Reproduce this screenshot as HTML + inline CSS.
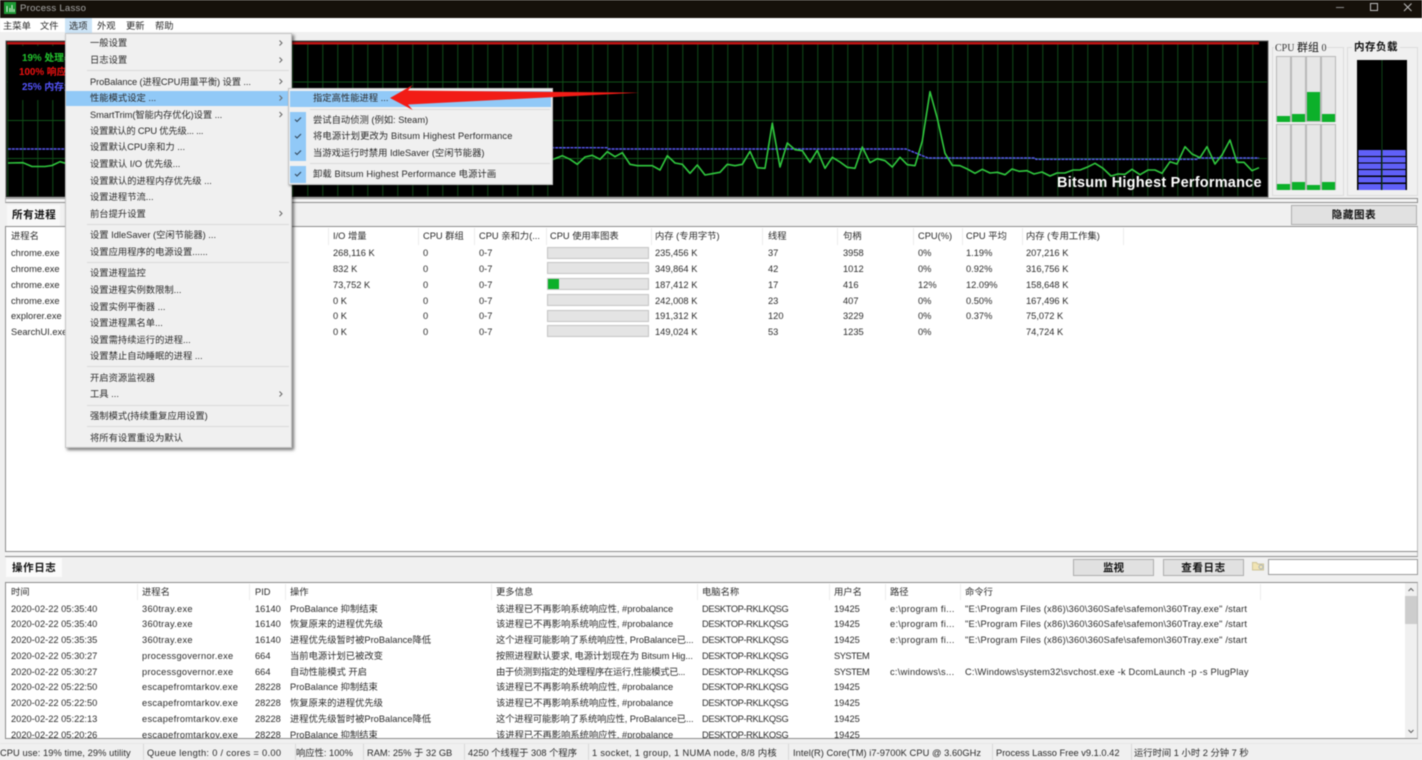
<!DOCTYPE html>
<html lang="zh"><head><meta charset="utf-8"><title>Process Lasso</title>
<style>
html,body{margin:0;padding:0;width:1422px;height:760px;overflow:hidden;background:#f0f0f0}
#p{position:relative;width:1422px;height:760px;overflow:hidden;background:#f0f0f0;font:9.3px/12px "Liberation Sans","Noto Sans CJK SC",sans-serif;color:#2a2a2a;filter:blur(.4px)}
#p div,#p span,#p svg{position:absolute}
span{white-space:nowrap}
.b{font-weight:700;font-size:10.5px;letter-spacing:.6px;color:#111;text-align:center}
.box{box-sizing:border-box}
.rw{left:0;width:1422px;height:12px}
.sep{background:#d9d9d9;height:1px;left:87px;width:202px}
.cs{width:1px;background:#ececec}
.pb{left:547px;width:102px;height:12px;box-sizing:border-box;background:#e4e4e4;border:1px solid #c4c4c4}
.sb{top:744px;width:1px;height:16px;background:#d8d8d8}
.bar{box-sizing:border-box;background:#e6e6e6;border:1px solid #b8b8b8}
.fill{background:#0cb02a}
.btn{box-sizing:border-box;background:#e1e1e1;border:1px solid #adadad}
.lc{letter-spacing:.27px}
.uc{letter-spacing:-.4px}
.cmd{letter-spacing:.2px}
.sy{letter-spacing:-.5px}
.t1{letter-spacing:-.1px}
.t2{letter-spacing:-.3px}
.pa{letter-spacing:.3px}
.q{letter-spacing:.3px}
</style></head><body><div id="p">

<!-- title bar -->
<div style="left:0;top:0;width:1422px;height:18px;background:#16110a"></div>
<div style="left:4px;top:2px;width:12px;height:12px;background:#1d9a35"></div>
<svg style="left:4px;top:2px" width="12" height="12"><path d="M3 4v6M6 6v4M8 3v7M10 7v3" stroke="#dff5e0" stroke-width="1"/></svg>
<span style="left:20px;top:2.500px;color:#a9a9a9;font-size:9.6px;letter-spacing:.25px">Process Lasso</span>
<svg style="left:1330px;top:0" width="92" height="18"><path d="M6 7.500h8" stroke="#8a8a8a"/><rect x="40.500" y="3.500" width="7" height="7" fill="none" stroke="#bdbdbd"/><path d="M74 3.500l7.500 7.500M81.500 3.500L74 11" stroke="#bdbdbd"/></svg>

<!-- menu bar -->
<div style="left:0;top:18px;width:1422px;height:14px;background:#fff"></div>
<div style="left:65px;top:18px;width:27px;height:15px;background:#cce4f7"></div>
<span style="left:3px;top:20px">主菜单</span><span style="left:40px;top:20px">文件</span><span style="left:69px;top:20px">选项</span><span style="left:97px;top:20px">外观</span><span style="left:126px;top:20px">更新</span><span style="left:155px;top:20px">帮助</span>

<!-- main graph -->
<svg style="left:0;top:0" width="1422" height="760">
<defs><pattern id="g" x="7.300" y="0" width="15" height="760" patternUnits="userSpaceOnUse"><rect x="0" width="1" height="760" fill="#0f4a16"/></pattern></defs>
<rect x="6" y="41" width="1262" height="156" fill="#000"/>
<rect x="7" y="44" width="1260" height="152" fill="url(#g)"/>
<path d="M7 82H1267M7 120.500H1267M7 158.500H1267" stroke="#0f5018" stroke-width="1"/>
<rect x="8" y="46" width="120" height="54" fill="#000"/>
<rect x="6" y="41" width="1262" height="156" fill="none" stroke="#5a5a5a" stroke-width="1"/>
<rect x="7" y="42" width="1252" height="2.500" fill="#c01414"/>
<polyline fill="none" stroke="#5a5af5" stroke-width="1.400" stroke-dasharray="3 .8" points="8,149 63,149 300,148 607,147.700 608,149 906,149 928,158 1035,158 1036,159.300 1197,159.300 1198,158 1259,158"/>
<polyline fill="none" stroke="#30c83e" stroke-width="1.600" stroke-linejoin="round" points="8,163 23,162.700 32,166.500 45,166.500 52,165.500 60,161.700 68,164 120,160 553.300,159.300 562.300,155.700 570,159.300 577.300,164.300 585,157 592.300,155.300 600,159.300 607.300,151.700 615,156.700 622.300,152.700 630,164.300 637.300,165.700 645,165.700 652.300,165.700 660,170 667.300,155.700 675,163 682.300,164.300 690,173.300 697.300,165 705,175 712.300,173.700 720,172.300 727.300,164.300 735,165.700 742.300,164.300 750,151.300 757.300,167.700 765,168.300 772.300,123.300 780,167 787.300,143 795,149.700 802.300,150.700 810,162.300 817.300,150.300 825,168.300 832.300,157.300 840,162 847.300,167.300 855,168.300 862.300,147 870,162.700 877.300,158.700 885,160.700 892.300,167 900,157.300 907.300,164.700 915,165.700 922.300,141 930,91.700 937.300,118.300 945,153.300 952.300,165.300 960,165.700 967.300,169 975,173.300 982.300,169.300 990,173 997.300,172.300 1005,174.700 1012,169 1019,171.300 1027,170.700 1034,174 1042,172 1050,176 1057,173 1065,173 1073,170 1080,170 1087,167.300 1095,163.300 1103,168.300 1111,176 1118,174 1125,174.300 1132,169.300 1140,174.700 1148,170 1155,170 1162,173.300 1170,161.700 1177,164 1185,146.700 1192,154 1200,157.700 1207,146.700 1215,164 1222,155 1230,140 1237,162.300 1244,162.300 1252,170.700 1259,167.700"/>
</svg>
<span style="left:22px;top:53px;color:#22c22e;font-weight:700;font-size:9.800px">19% 处理器使用率</span>
<span style="left:19px;top:67px;color:#f01010;font-weight:700;font-size:9.800px">100% 响应性</span>
<span style="left:22px;top:82px;color:#5555ff;font-weight:700;font-size:9.800px">25% 内存负载</span>
<span style="left:1057px;top:174px;line-height:18px;color:#fff;font-weight:700;font-size:14.500px;letter-spacing:.22px;text-shadow:0 0 1px #000">Bitsum Highest Performance</span>

<!-- CPU group -->
<div class="box" style="left:1272px;top:47px;width:72px;height:149px;border:1px solid #dcdcdc"></div>
<span style="left:1274px;top:41px;background:#f0f0f0;padding:0 1px;font:10px/12px 'Liberation Serif','Noto Sans CJK SC',serif;color:#333">CPU <b style="position:static;font-weight:400;font-size:11px;font-family:'Noto Sans CJK SC',sans-serif;color:#111">群组</b> 0</span>
<div class="bar" style="left:1276px;top:56px;width:15px;height:66px"></div><div class="fill" style="left:1277px;top:116px;width:13px;height:6px"></div>
<div class="bar" style="left:1291px;top:56px;width:15px;height:66px"></div><div class="fill" style="left:1292px;top:114px;width:13px;height:8px"></div>
<div class="bar" style="left:1306px;top:56px;width:15px;height:66px"></div><div class="fill" style="left:1307px;top:92px;width:13px;height:29px"></div>
<div class="bar" style="left:1321px;top:56px;width:15px;height:66px"></div><div class="fill" style="left:1322px;top:114px;width:13px;height:8px"></div>
<div class="bar" style="left:1276px;top:124px;width:15px;height:66px"></div><div class="fill" style="left:1277px;top:184px;width:13px;height:6px"></div>
<div class="bar" style="left:1291px;top:124px;width:15px;height:66px"></div><div class="fill" style="left:1292px;top:182px;width:13px;height:8px"></div>
<div class="bar" style="left:1306px;top:124px;width:15px;height:66px"></div><div class="fill" style="left:1307px;top:185px;width:13px;height:5px"></div>
<div class="bar" style="left:1321px;top:124px;width:15px;height:66px"></div><div class="fill" style="left:1322px;top:182px;width:13px;height:8px"></div>

<!-- memory -->
<div class="box" style="left:1347px;top:47px;width:71px;height:149px;border:1px solid #dcdcdc"></div>
<span class="b" style="left:1352px;top:41px;background:#f0f0f0;padding:0 2px;letter-spacing:.5px">内存负载</span>
<svg style="left:1357px;top:60px" width="50" height="130"><rect width="50" height="130" fill="#000"/><rect x="24.500" width="1" height="130" fill="#0d4014"/>
<path d="M1.500 90h22.500v6h-22.500zM1.500 97h22.500v5.500h-22.500zM1.500 103.500h22.500v5.500h-22.500zM1.500 110h22.500v5.500h-22.500zM1.500 117h22.500v5.500h-22.500zM1.500 124h22.500v6h-22.500zM25.500 90h23v6h-23zM25.500 97h23v5.500h-23zM25.500 103.500h23v5.500h-23zM25.500 110h23v5.500h-23zM25.500 117h23v5.500h-23zM25.500 124h23v6h-23z" fill="#6060f8"/></svg>

<!-- splitter 1 -->
<div class="box" style="left:5px;top:198px;width:1413px;height:5px;border:1px solid #8d8d8d;border-left-color:#bbb;background:#f4f4f4"></div>

<!-- tab + button -->
<div style="left:7px;top:205px;width:53px;height:22px;background:#f8f8f8"></div>
<span class="b" style="left:12px;top:209px">所有进程</span>
<div class="btn" style="left:1291px;top:205px;width:126px;height:20px"></div>
<span class="b" style="left:1291px;top:209px;width:126px">隐藏图表</span>

<!-- process table -->
<div class="box" style="left:5px;top:226px;width:1413px;height:326px;background:#fff;border:1px solid #8c8c8c;border-color:#8c8c8c #bbb #8c8c8c #8c8c8c"></div>
<div class="cs" style="left:328px;top:228px;height:17px"></div><div class="cs" style="left:418px;top:228px;height:17px"></div><div class="cs" style="left:474px;top:228px;height:17px"></div><div class="cs" style="left:546px;top:228px;height:17px"></div><div class="cs" style="left:651px;top:228px;height:17px"></div><div class="cs" style="left:762px;top:228px;height:17px"></div><div class="cs" style="left:837px;top:228px;height:17px"></div><div class="cs" style="left:913px;top:228px;height:17px"></div><div class="cs" style="left:962px;top:228px;height:17px"></div><div class="cs" style="left:1022px;top:228px;height:17px"></div><div class="cs" style="left:1123px;top:228px;height:17px"></div>
<div class="rw" style="top:230px"><span style="left:11px">进程名</span><span style="left:333px">I/O 增量</span><span style="left:423px">CPU 群组</span><span style="left:479px">CPU 亲和力(...</span><span style="left:550px">CPU 使用率图表</span><span style="left:655px">内存 (专用字节)</span><span style="left:768px">线程</span><span style="left:843px">句柄</span><span style="left:918px">CPU(%)</span><span style="left:966px">CPU 平均</span><span style="left:1026px">内存 (专用工作集)</span></div>
<div class="pb" style="top:247px"></div><div class="pb" style="top:262px"></div><div class="pb" style="top:278px"></div><div class="pb" style="top:294px"></div><div class="pb" style="top:310px"></div><div class="pb" style="top:325px"></div>
<div class="fill" style="left:548px;top:279px;width:11px;height:10px"></div>
<div class="rw" style="top:247px"><span style="left:11px">chrome.exe</span><span style="left:333px">268,116 K</span><span style="left:423px">0</span><span style="left:479px">0-7</span><span style="left:655px">235,456 K</span><span style="left:768px">37</span><span style="left:843px">3958</span><span style="left:918px">0%</span><span style="left:966px">1.19%</span><span style="left:1026px">207,216 K</span></div>
<div class="rw" style="top:263px"><span style="left:11px">chrome.exe</span><span style="left:333px">832 K</span><span style="left:423px">0</span><span style="left:479px">0-7</span><span style="left:655px">349,864 K</span><span style="left:768px">42</span><span style="left:843px">1012</span><span style="left:918px">0%</span><span style="left:966px">0.92%</span><span style="left:1026px">316,756 K</span></div>
<div class="rw" style="top:279px"><span style="left:11px">chrome.exe</span><span style="left:333px">73,752 K</span><span style="left:423px">0</span><span style="left:479px">0-7</span><span style="left:655px">187,412 K</span><span style="left:768px">17</span><span style="left:843px">416</span><span style="left:918px">12%</span><span style="left:966px">12.09%</span><span style="left:1026px">158,648 K</span></div>
<div class="rw" style="top:294.500px"><span style="left:11px">chrome.exe</span><span style="left:333px">0 K</span><span style="left:423px">0</span><span style="left:479px">0-7</span><span style="left:655px">242,008 K</span><span style="left:768px">23</span><span style="left:843px">407</span><span style="left:918px">0%</span><span style="left:966px">0.50%</span><span style="left:1026px">167,496 K</span></div>
<div class="rw" style="top:310px"><span style="left:11px">explorer.exe</span><span style="left:333px">0 K</span><span style="left:423px">0</span><span style="left:479px">0-7</span><span style="left:655px">191,312 K</span><span style="left:768px">120</span><span style="left:843px">3229</span><span style="left:918px">0%</span><span style="left:966px">0.37%</span><span style="left:1026px">75,072 K</span></div>
<div class="rw" style="top:326px"><span style="left:11px">SearchUI.exe</span><span style="left:333px">0 K</span><span style="left:423px">0</span><span style="left:479px">0-7</span><span style="left:655px">149,024 K</span><span style="left:768px">53</span><span style="left:843px">1235</span><span style="left:918px">0%</span><span style="left:1026px">74,724 K</span></div>

<!-- splitter 2 -->
<div class="box" style="left:5px;top:552px;width:1413px;height:5px;border-bottom:1px solid #8d8d8d;border-right:1px solid #bbb;background:#f4f4f4"></div>

<!-- log tab + controls -->
<div style="left:6px;top:558px;width:56px;height:19px;background:#fbfbfb"></div>
<span class="b" style="left:12px;top:562px">操作日志</span>
<div class="btn" style="left:1073px;top:559px;width:81px;height:17px"></div>
<span class="b" style="left:1073px;top:562px;width:81px;letter-spacing:0">监视</span>
<div class="btn" style="left:1163px;top:559px;width:81px;height:17px"></div>
<span class="b" style="left:1163px;top:562px;width:81px">查看日志</span>
<svg style="left:1252px;top:560px" width="13" height="11"><path d="M.5 2.500h4l1 1.500h6v6h-11z" fill="#f1e4b4" stroke="#cfc59a"/><circle cx="9" cy="7" r="2" fill="none" stroke="#a9b4bd"/></svg>
<div class="box" style="left:1268px;top:559px;width:150px;height:16px;background:#fff;border:1px solid #9b9b9b"></div>

<!-- log table -->
<div class="box" style="left:5px;top:582px;width:1413px;height:157px;background:#fff;border:1px solid #8c8c8c;border-color:#8c8c8c #bbb #8c8c8c #8c8c8c"></div>
<div class="cs" style="left:137px;top:584px;height:16px"></div><div class="cs" style="left:249px;top:584px;height:16px"></div><div class="cs" style="left:285px;top:584px;height:16px"></div><div class="cs" style="left:491px;top:584px;height:16px"></div><div class="cs" style="left:697px;top:584px;height:16px"></div><div class="cs" style="left:829px;top:584px;height:16px"></div><div class="cs" style="left:885px;top:584px;height:16px"></div><div class="cs" style="left:960px;top:584px;height:16px"></div><div class="cs" style="left:1260px;top:584px;height:16px"></div>
<div class="rw" style="top:585.500px"><span style="left:11px">时间</span><span style="left:142px">进程名</span><span style="left:255px">PID</span><span style="left:290px">操作</span><span style="left:496px">更多信息</span><span style="left:702px">电脑名称</span><span style="left:834px">用户名</span><span style="left:890px">路径</span><span style="left:965px">命令行</span></div>
<div class="rw" style="top:602.500px"><span style="left:11px">2020-02-22 05:35:40</span><span class="lc" style="left:142px">360tray.exe</span><span style="left:255px">16140</span><span style="left:290px">ProBalance 抑制结束</span><span style="left:496px">该进程已不再影响系统响应性, #probalance</span><span class="uc" style="left:702px">DESKTOP-RKLKQSG</span><span style="left:834px">19425</span><span class="pa" style="left:890px">e:\program fi...</span><span class="cmd" style="left:965px">"E:\Program Files (x86)\360\360Safe\safemon\360Tray.exe" /start</span></div>
<div class="rw" style="top:618px"><span style="left:11px">2020-02-22 05:35:40</span><span class="lc" style="left:142px">360tray.exe</span><span style="left:255px">16140</span><span style="left:290px">恢复原来的进程优先级</span><span style="left:496px">该进程已不再影响系统响应性, #probalance</span><span class="uc" style="left:702px">DESKTOP-RKLKQSG</span><span style="left:834px">19425</span><span class="pa" style="left:890px">e:\program fi...</span><span class="cmd" style="left:965px">"E:\Program Files (x86)\360\360Safe\safemon\360Tray.exe" /start</span></div>
<div class="rw" style="top:634px"><span style="left:11px">2020-02-22 05:35:35</span><span class="lc" style="left:142px">360tray.exe</span><span style="left:255px">16140</span><span style="left:290px">进程优先级暂时被ProBalance降低</span><span class="t1" style="left:496px">这个进程可能影响了系统响应性, ProBalance已...</span><span class="uc" style="left:702px">DESKTOP-RKLKQSG</span><span style="left:834px">19425</span><span class="pa" style="left:890px">e:\program fi...</span><span class="cmd" style="left:965px">"E:\Program Files (x86)\360\360Safe\safemon\360Tray.exe" /start</span></div>
<div class="rw" style="top:649.500px"><span style="left:11px">2020-02-22 05:30:27</span><span class="lc" style="left:142px">processgovernor.exe</span><span style="left:255px">664</span><span style="left:290px">当前电源计划已被改变</span><span class="t1" style="left:496px">按照进程默认要求, 电源计划现在为 Bitsum Hig...</span><span class="uc" style="left:702px">DESKTOP-RKLKQSG</span><span class="sy" style="left:834px">SYSTEM</span></div>
<div class="rw" style="top:665.500px"><span style="left:11px">2020-02-22 05:30:27</span><span class="lc" style="left:142px">processgovernor.exe</span><span style="left:255px">664</span><span style="left:290px">自动性能模式 开启</span><span class="t2" style="left:496px">由于侦测到指定的处理程序在运行,性能模式已...</span><span class="uc" style="left:702px">DESKTOP-RKLKQSG</span><span class="sy" style="left:834px">SYSTEM</span><span class="lc" style="left:890px">c:\windows\s...</span><span class="cmd" style="left:965px">C:\Windows\system32\svchost.exe -k DcomLaunch -p -s PlugPlay</span></div>
<div class="rw" style="top:681px"><span style="left:11px">2020-02-22 05:22:50</span><span class="lc" style="left:142px">escapefromtarkov.exe</span><span style="left:255px">28228</span><span style="left:290px">ProBalance 抑制结束</span><span style="left:496px">该进程已不再影响系统响应性, #probalance</span><span class="uc" style="left:702px">DESKTOP-RKLKQSG</span><span style="left:834px">19425</span></div>
<div class="rw" style="top:697px"><span style="left:11px">2020-02-22 05:22:50</span><span class="lc" style="left:142px">escapefromtarkov.exe</span><span style="left:255px">28228</span><span style="left:290px">恢复原来的进程优先级</span><span style="left:496px">该进程已不再影响系统响应性, #probalance</span><span class="uc" style="left:702px">DESKTOP-RKLKQSG</span><span style="left:834px">19425</span></div>
<div class="rw" style="top:712.500px"><span style="left:11px">2020-02-22 05:22:13</span><span class="lc" style="left:142px">escapefromtarkov.exe</span><span style="left:255px">28228</span><span style="left:290px">进程优先级暂时被ProBalance降低</span><span class="t1" style="left:496px">这个进程可能影响了系统响应性, ProBalance已...</span><span class="uc" style="left:702px">DESKTOP-RKLKQSG</span><span style="left:834px">19425</span></div>
<div class="rw" style="top:728.500px;height:9.500px;overflow:hidden"><span style="left:11px">2020-02-22 05:20:26</span><span class="lc" style="left:142px">escapefromtarkov.exe</span><span style="left:255px">28228</span><span style="left:290px">ProBalance 抑制结束</span><span style="left:496px">该进程已不再影响系统响应性, #probalance</span><span class="uc" style="left:702px">DESKTOP-RKLKQSG</span><span style="left:834px">19425</span></div>
<div style="left:1405px;top:583px;width:12px;height:155px;background:#f0f0f0"></div>
<div style="left:1405px;top:596px;width:12px;height:28px;background:#cdcdcd"></div>
<svg style="left:1405px;top:583px" width="12" height="155"><path d="M3.500 8l2.500-2.500 2.500 2.500M3.500 147l2.500 2.500 2.500-2.500" fill="none" stroke="#606060"/></svg>

<!-- status bar -->
<div style="left:0;top:739px;width:1422px;height:21px;background:#f0f0f0"></div>
<div style="left:0;top:743px;width:1422px;height:1px;background:#e6e6e6"></div>
<span style="left:0;top:747px;letter-spacing:.07px">CPU use: 19% time, 29% utility</span><div class="sb" style="left:143px"></div>
<span class="q" style="left:147px;top:747px">Queue length: 0 / cores = 0.00</span><div class="sb" style="left:295px"></div>
<span style="left:296px;top:747px">响应性: 100%</span><div class="sb" style="left:363px"></div>
<span style="left:367px;top:747px">RAM: 25% 于 32 GB</span><div class="sb" style="left:464px"></div>
<span style="left:468px;top:747px">4250 个线程于 308 个程序</span><div class="sb" style="left:588px"></div>
<span class="q" style="left:592px;top:747px">1 socket, 1 group, 1 NUMA node, 8/8 内核</span><div class="sb" style="left:788px"></div>
<span style="left:793px;top:747px;letter-spacing:.05px">Intel(R) Core(TM) i7-9700K CPU @ 3.60GHz</span><div class="sb" style="left:992px"></div>
<span style="left:996px;top:747px">Process Lasso Free v9.1.0.42</span><div class="sb" style="left:1131px"></div>
<span style="left:1134px;top:747px">运行时间 1 小时 2 分钟 7 秒</span>

<!-- options menu -->
<div class="box" style="left:65px;top:33px;width:227px;height:415px;background:#f0f0f0;border:1px solid #c4c4c4;box-shadow:2px 2px 3px rgba(0,0,0,.55)"></div>
<div style="left:66px;top:91px;width:222px;height:15px;background:#91c9f7"></div>
<div class="sep" style="top:70px"></div><div class="sep" style="top:224px"></div><div class="sep" style="top:262px"></div><div class="sep" style="top:366px"></div><div class="sep" style="top:405px"></div><div class="sep" style="top:426px"></div>
<span style="left:90px;top:37px">一般设置</span>
<span style="left:90px;top:54px">日志设置</span>
<span style="left:90px;top:75.500px;letter-spacing:-.1px">ProBalance (进程CPU用量平衡) 设置 ...</span>
<span style="left:90px;top:92px">性能模式设定 ...</span>
<span style="left:90px;top:108.500px;letter-spacing:-.08px">SmartTrim(智能内存优化)设置 ...</span>
<span style="left:90px;top:125px;letter-spacing:-.2px">设置默认的 CPU 优先级... ...</span>
<span style="left:90px;top:141px">设置默认CPU亲和力 ...</span>
<span style="left:90px;top:158px">设置默认 I/O 优先级...</span>
<span style="left:90px;top:174.500px">设置默认的进程内存优先级 ...</span>
<span style="left:90px;top:191px">设置进程节流...</span>
<span style="left:90px;top:207.500px">前台提升设置</span>
<span style="left:90px;top:229px">设置 IdleSaver (空闲节能器) ...</span>
<span style="left:90px;top:246px">设置应用程序的电源设置......</span>
<span style="left:90px;top:267px">设置进程监控</span>
<span style="left:90px;top:284px">设置进程实例数限制...</span>
<span style="left:90px;top:300.500px">设置实例平衡器 ...</span>
<span style="left:90px;top:317px">设置进程黑名单...</span>
<span style="left:90px;top:333.500px">设置需持续运行的进程...</span>
<span style="left:90px;top:350px">设置禁止自动睡眠的进程 ...</span>
<span style="left:90px;top:371.500px">开启资源监视器</span>
<span style="left:90px;top:388px">工具 ...</span>
<span style="left:90px;top:410px">强制模式(持续重复应用设置)</span>
<span style="left:90px;top:432px">将所有设置重设为默认</span>
<svg style="left:0;top:0" width="300" height="420"><path d="M279.500 40.500l2.500 2.500-2.500 2.500M279.500 57.500l2.500 2.500-2.500 2.500M279.500 79l2.500 2.500-2.500 2.500M279.500 95.500l2.500 2.500-2.500 2.500M279.500 112l2.500 2.500-2.500 2.500M279.500 211l2.500 2.500-2.500 2.500M279.500 391.500l2.500 2.500-2.500 2.500" fill="none" stroke="#666"/></svg>

<!-- submenu -->
<div class="box" style="left:288px;top:88px;width:265px;height:97px;background:#f0f0f0;border:1px solid #c4c4c4;box-shadow:1px 1px 2px rgba(0,0,0,.4)"></div>
<div style="left:290px;top:91px;width:261px;height:16px;background:#91c9f7"></div>
<div style="left:290px;top:112px;width:16px;height:49px;background:#91c9f7"></div>
<div style="left:290px;top:166px;width:16px;height:17px;background:#91c9f7"></div>
<div class="sep" style="left:310px;top:109px;width:240px"></div>
<div class="sep" style="left:310px;top:163px;width:240px"></div>
<svg style="left:290px;top:112px" width="16" height="72"><path d="M5 7.500l2 2 4-4M5 24l2 2 4-4M5 40.500l2 2 4-4M5 62l2 2 4-4" fill="none" stroke="#33475a" stroke-width="1.100"/></svg>
<span style="left:313px;top:92px">指定高性能进程 ...</span>
<span style="left:313px;top:113.500px">尝试自动侦测 (例如: Steam)</span>
<span style="left:313px;top:130px;letter-spacing:.12px">将电源计划更改为 Bitsum Highest Performance</span>
<span style="left:313px;top:146.500px">当游戏运行时禁用 IdleSaver (空闲节能器)</span>
<span style="left:313px;top:168px;letter-spacing:.12px">卸载 Bitsum Highest Performance 电源计画</span>

<!-- annotation arrow -->
<svg style="left:0;top:0" width="700" height="130"><polygon points="390,98 412.700,85 408,90.500 639,92.700 408,104.500 412.700,110" fill="#f21c16"/></svg>
</div></body></html>
